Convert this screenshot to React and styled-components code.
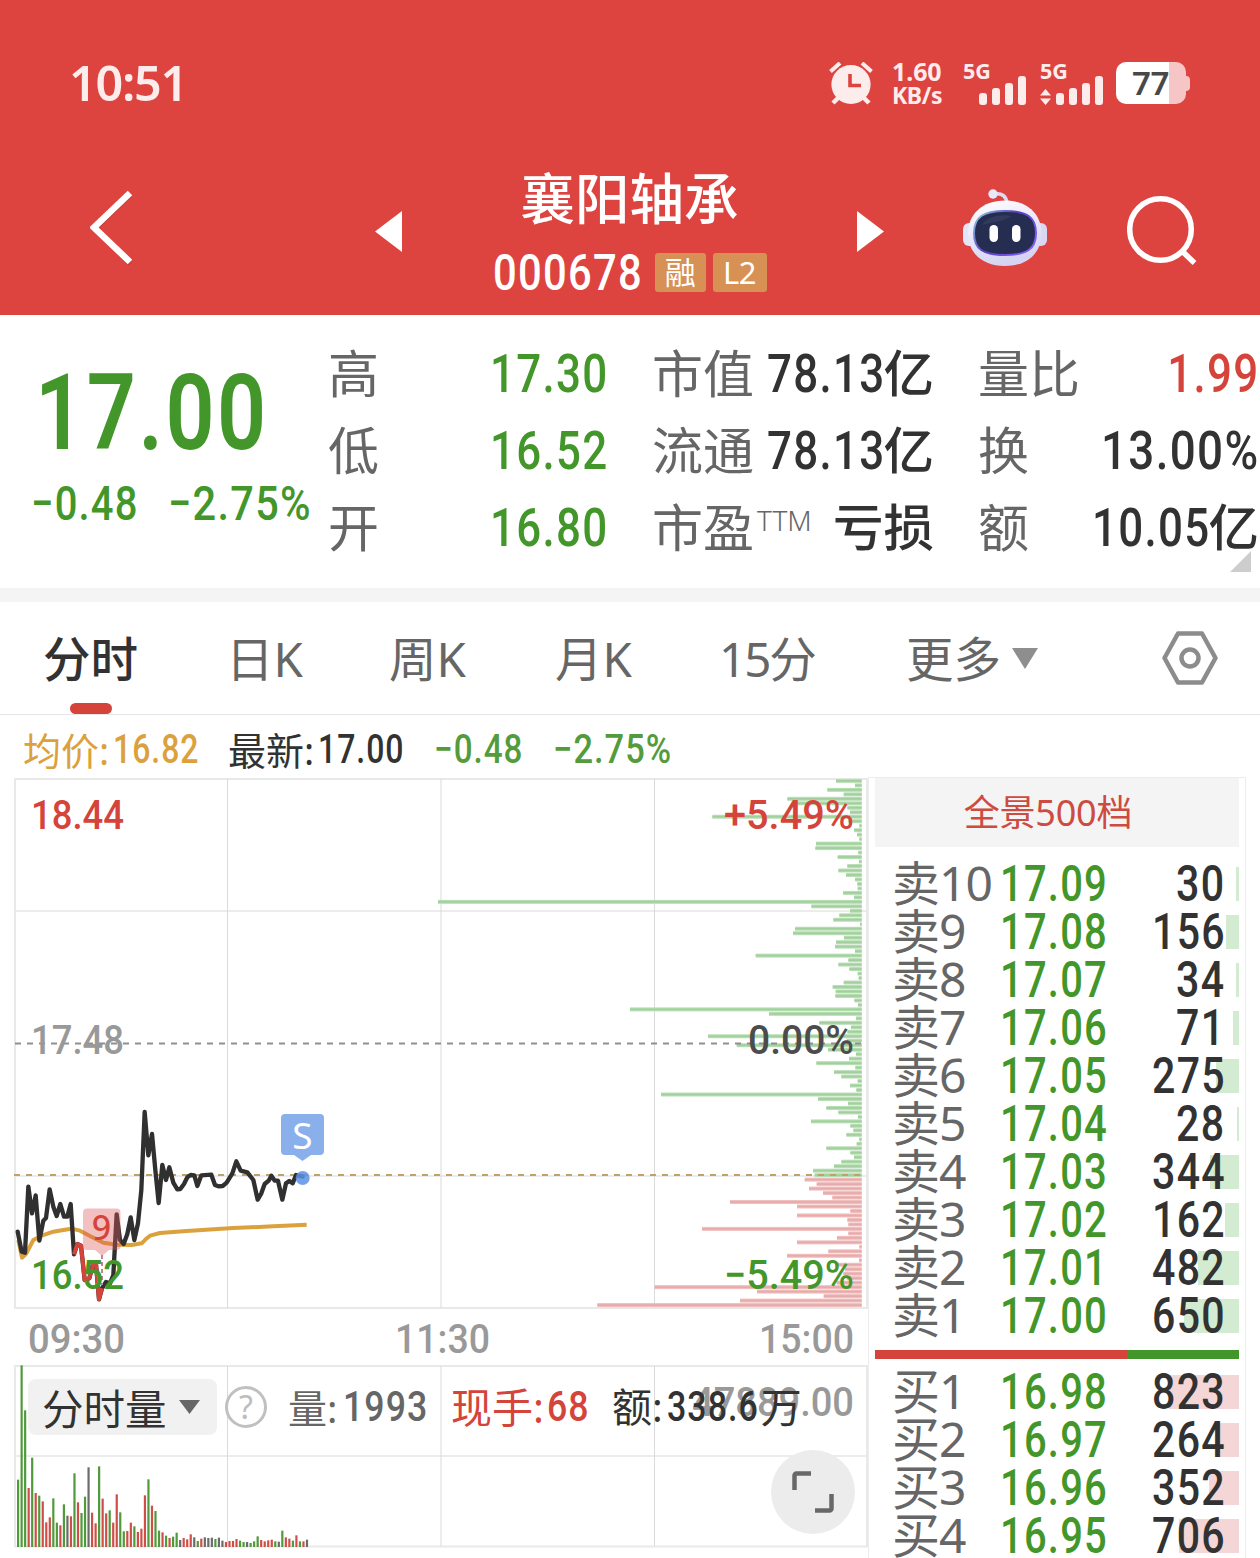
import React from 'react'
import styled, { createGlobalStyle } from 'styled-components'

const GREEN = '#43962a'
const RED = '#d5443a'
const DARK = '#323232'
const GREY = '#666666'

const GlobalStyle = createGlobalStyle`
    * { box-sizing: border-box; }
    body {
        margin: 0;
        background: #fff;
        font-family: "Noto Sans", "Noto Sans CJK SC", sans-serif;
    }
    svg { display: block; flex: none; }
`

const Screen = styled.div`
    width: 1260px;
    height: 1558px;
    overflow: hidden;
    background: #fff;
`

// narrow digits used for every price and amount
const Num = styled.span`
    display: inline-block;
    flex: none;
    width: ${p => (p.$w ? p.$w + 'px' : 'auto')};
    font-family: Roboto, sans-serif;
    font-size: ${p => p.$size}px;
    font-weight: ${p => p.$weight || 500};
    letter-spacing: 0.03em;
    margin-right: ${p => (p.$right ? '-0.03em' : 0)};
    line-height: 1;
    white-space: nowrap;
    color: ${p => p.$color || 'inherit'};
    transform: scaleX(${p => p.$x || 0.83});
    transform-origin: ${p => (p.$right ? 'right' : 'left')} center;
`
const Han = styled.span`
    flex: none;
    margin: 0 ${p => p.$gap || 0}px ${p => p.$lift || 0}px 0;
    font-size: ${p => p.$size}px;
    font-weight: ${p => p.$weight || 400};
    letter-spacing: ${p => p.$ls || 0}px;
    line-height: 1;
    white-space: nowrap;
    color: ${p => p.$color || 'inherit'};
`

/* ---------- header ---------- */
const Header = styled.header`
    height: 315px;
    background: #dd4440;
    color: #fff;
`
const StatusBar = styled.div`
    display: flex;
    align-items: flex-start;
    height: 155px;
    padding: 62px 0 0 69px;
    color: #fdecec;
`
const Clock = styled.div`
    width: 760px;
    font-size: 48.5px;
    font-weight: 600;
    line-height: 41px;
    letter-spacing: -1.3px;
`
const Speed = styled.div`
    width: 71px;
    margin-left: 19px;
    font-size: 25px;
    font-weight: 700;
    line-height: 24px;
    letter-spacing: -0.1px;
    margin-top: -3px;
    small {
        display: block;
        font-size: 23px;
        letter-spacing: -0.4px;
    }
`
const Signal = styled.div`
    width: ${p => p.$w}px;
    font-size: 21.5px;
    font-weight: 700;
    line-height: 14px;
    margin-top: 2px;
    svg { margin-top: -3px; }
`
const Battery = styled.div`
    display: flex;
    align-items: center;
    &::after {
        content: "";
        width: 4px;
        height: 15px;
        border-radius: 0 4px 4px 0;
        background: #f6c6c7;
    }
`
const BatteryBody = styled.div`
    width: 70px;
    height: 42px;
    border-radius: 10px;
    background: linear-gradient(90deg, #fff 53px, #f6c6c7 53px);
    color: #484848;
    font-size: 33px;
    font-weight: 600;
    line-height: 42px;
    letter-spacing: -0.5px;
    padding-left: 16px;
`
const NavBar = styled.div`
    display: grid;
    grid-template-columns: 285px 27px 455px 105px 165px auto;
    padding-left: 90px;
    height: 160px;
    align-items: start;
`
const NavIcon = styled.div`
    margin-top: ${p => p.$top}px;
`
const Title = styled.div`
    display: flex;
    flex-direction: column;
    align-items: center;
    padding-top: 16px;
`
const Code = styled.div`
    display: flex;
    align-items: center;
    margin-top: 27px;
    height: 40px;
`
const Badge = styled.span`
    width: ${p => p.$w}px;
    height: 39px;
    margin-left: 7px;
    border-radius: 3px;
    background: #d79155;
    font-size: 31px;
    line-height: 39px;
    text-align: center;
    letter-spacing: -0.5px;
`

/* ---------- quote ---------- */
const Quote = styled.section`
    position: relative;
    display: flex;
    height: 287px;
    border-bottom: 14px solid #f4f4f4;
`
const PriceBlock = styled.div`
    width: 328px;
    padding: 46px 0 0 35px;
    color: ${GREEN};
`
const Changes = styled.div`
    display: flex;
    margin: 12px 0 0 -4px;
`
const Stats = styled.div`
    display: grid;
    grid-template-columns: 279px 281px 280px;
    grid-auto-rows: 77px;
    column-gap: 45px;
    padding-top: 21px;
`
const Stat = styled.div`
    display: flex;
    align-items: center;
    color: ${GREY};
`
const StatValue = styled.div`
    display: flex;
    align-items: center;
    justify-content: flex-end;
    flex: 1;
    min-width: 0;
    padding-bottom: 2px;
    color: ${p => p.$color};
`
const Sup = styled.sup`
    align-self: flex-start;
    width: 56px;
    margin: 16px 0 0 3px;
    font-size: 28px;
    font-weight: 300;
    line-height: 28px;
`
const Corner = styled.i`
    position: absolute;
    right: 9px;
    bottom: 16px;
    border-left: 21px solid transparent;
    border-bottom: 21px solid #cdcdcd;
`

/* ---------- tabs ---------- */
const Tabs = styled.nav`
    display: grid;
    grid-template-columns: 183px 163px 166px 164px 187px 256px auto;
    align-items: center;
    height: 113px;
    padding-left: 43px;
    border-bottom: 1px solid #e6e6e6;
`
const Tab = styled.div`
    position: relative;
    display: flex;
    align-items: center;
    height: 112px;
    padding-bottom: 3px;
    gap: 11px;
    font-size: 47.5px;
    font-weight: ${p => (p.$active ? 500 : 400)};
    color: ${p => (p.$active ? DARK : GREY)};
    letter-spacing: ${p => p.$ls || 0}px;
    white-space: nowrap;
    svg { margin-top: 3px; }
    &::after {
        content: "";
        display: ${p => (p.$active ? 'block' : 'none')};
        position: absolute;
        left: 27px;
        bottom: 0;
        width: 42px;
        height: 11px;
        border-radius: 6px;
        background: ${RED};
    }
`

/* ---------- chart ---------- */
const Body = styled.main`
    display: flex;
`
const ChartColumn = styled.div`
    position: relative;
    width: 868px;
`
const Legend = styled.div`
    display: flex;
    align-items: center;
    height: 63px;
    padding: 7px 0 0 23px;
`
const LegendItem = styled.div`
    display: flex;
    align-items: center;
    width: ${p => p.$w}px;
    color: ${p => p.$color};
`
const ChartText = styled.text`
    font-family: Roboto, sans-serif;
    font-size: 41px;
    font-weight: 500;
`
const VolumeBar = styled.div`
    position: absolute;
    left: 28px;
    top: 664px;
    display: flex;
    align-items: center;
    height: 56px;
`
const Picker = styled.div`
    display: flex;
    align-items: center;
    gap: 12px;
    width: 189px;
    height: 56px;
    margin-right: 8px;
    padding-left: 14px;
    border-radius: 8px;
    background: #f1f1f1;
`
const Help = styled.div`
    width: 42px;
    height: 42px;
    margin-right: 21px;
    border: 3px solid #c0c0c0;
    border-radius: 50%;
    color: #bdbdbd;
    font-size: 32px;
    line-height: 35px;
    text-align: center;
`
const Expand = styled.button`
    position: absolute;
    left: 771px;
    top: 735px;
    width: 84px;
    height: 84px;
    padding: 20px;
    border: 0;
    border-radius: 50%;
    background: #ececec;
`

/* ---------- order book ---------- */
const Book = styled.aside`
    width: 378px;
    height: 790px;
    margin-top: 62px;
    padding: 0 6px;
    border: 1px solid #ececec;
    border-width: 1px 1px 0 1px;
`
const BookHead = styled.div`
    height: 69px;
    margin-bottom: 12px;
    background: #f4f4f4;
    color: #cd4b40;
    font-size: 36px;
    line-height: 70px;
    text-align: center;
    letter-spacing: -0.2px;
    padding-right: 18px;
`
const Row = styled.div`
    display: grid;
    grid-template-columns: 108px 110px 1fr;
    align-items: center;
    height: 48px;
    padding: 0 15px 1px 17px;
    background: linear-gradient(${p => p.$tint}, ${p => p.$tint}) no-repeat right 8px / ${p => p.$bar}px 34px;
`
const Amount = styled.div`
    text-align: right;
    line-height: 1;
`
const Ratio = styled.div`
    height: 9px;
    margin: 11px 0 8px;
    background: linear-gradient(90deg, ${RED} 252px, ${GREEN} 252px);
`

const asks = [
  ['卖10', '17.09', 30],
  ['卖9', '17.08', 156],
  ['卖8', '17.07', 34],
  ['卖7', '17.06', 71],
  ['卖6', '17.05', 275],
  ['卖5', '17.04', 28],
  ['卖4', '17.03', 344],
  ['卖3', '17.02', 162],
  ['卖2', '17.01', 482],
  ['卖1', '17.00', 650],
]
const bids = [
  ['买1', '16.98', 823],
  ['买2', '16.97', 264],
  ['买3', '16.96', 352],
  ['买4', '16.95', 706],
]

// depth bar lengths, three units to a pixel
const askDepth = [
  77, 20, 103, 54, 223, 193, 43, 35, 448, 40, 7, 23, 14, 7, 137, 139, 10, 72, 8, 43,
  70, 47, 20, 13, 12, 56, 23, 1271, 151, 35, 67, 85, 5, 200, 206, 53, 77, 80, 20, 318,
  40, 70, 37, 12, 9, 54, 87, 78, 79, 22, 11, 695, 278, 17, 127, 32, 43, 461, 45, 375,
  101, 17, 38, 136, 19, 83, 61, 12, 35, 16, 602, 131, 41, 106, 70, 11, 152, 34, 25, 46,
  7, 15, 106, 34, 23, 61, 83, 146, 141,
]
const bidDepth = [
  171, 135, 158, 116, 88, 395, 194, 34, 194, 43, 40, 479, 40, 74, 194, 7, 100, 224, 8, 80,
  50, 55, 45, 75, 621, 314, 114, 365, 793,
]
const depth = [...askDepth, ...bidDepth]

// one entry a minute: colour letter and height
const volume = (
  'g202 g545 g410 r177 g268 r162 g154 r137 r74 r89 g146 g73 r65 g128 k94 r92 g221 r134 g102 g151 ' +
  'k239 r103 r71 g242 r145 r101 g110 r73 r158 g104 g47 r48 r73 g62 r45 r55 r155 g203 r124 g108 ' +
  'g49 r44 g34 r27 g31 g43 k21 r27 r23 r38 k29 g18 r25 k29 k27 k28 g24 k28 k19 r15 r18 r18 r24 ' +
  'g19 g15 k15 g12 g17 g32 r21 r17 r20 r22 g17 k16 g49 r29 r25 g19 r35 g17 r17 k22'
).split(' ')
const volumeColor = { g: '#4f9a3a', r: '#cf4f48', k: '#6b6b6b' }

const tracePrice =
  '53,455 65,515 75,518 85,320 96,400 107,346 118,482 130,422 138,414 149,328 160,380 170,408 181,372 192,410 202,410 212,372 222,523 232,492 243,497 254,600 268,595 278,556 288,553 297,658 306,625 318,606 330,610 340,585 350,403 360,480 371,492 382,462 392,412 403,480 414,430 424,330 434,96 445,226 456,162 466,270 476,369 487,255 498,300 508,262 520,308 532,328 541,327 552,312 562,292 572,285 583,286 592,318 604,286 634,284 645,315 655,319 668,318 680,308 697,280 709,244 722,272 742,277 760,300 773,359 784,340 794,312 806,302 814,287 824,302 834,302 847,359 858,310 868,303 878,310 888,285 908,290'
const traceDrop = '222,523 232,492 243,497 254,600 268,595 278,556 288,553 297,658 306,625'
const traceAverage =
  '55,480 66,533 78,522 100,480 125,467 160,455 190,450 215,446 240,452 270,468 310,488 350,494 395,495 425,490 437,478 450,467 480,459 560,453 700,444 820,439 920,434'

const AlarmIcon = () => (
  <svg width="44" height="43" viewBox="0 0 44 43">
    <path d="M1.500 9.500l9.500-8.500M42.500 9.500l-9.500-8.500" stroke="#fdecec" strokeWidth="4" />
    <path d="M9 36l-5 5M35 36l5 5" stroke="#fdecec" strokeWidth="4.500" />
    <circle cx="22" cy="22.500" r="19.600" fill="#fdecec" />
    <path d="M21 12v11.500h11" fill="none" stroke="#dd4440" strokeWidth="3.600" />
  </svg>
)

const Bars = ({ arrows }) => (
  <svg width={arrows ? 64 : 65} height="30" viewBox={arrows ? '0 0 64 30' : '-16 0 65 30'} fill="#fdecec">
    <rect x={arrows ? 16 : 0} y="18" width="8" height="12" rx="3" />
    <rect x={arrows ? 29 : 13} y="13" width="8" height="17" rx="3" />
    <rect x={arrows ? 42 : 26} y="8" width="8" height="22" rx="3" />
    <rect x={arrows ? 55 : 39} y="1" width="8" height="29" rx="3" />
    {arrows && <path d="M0 20.500L5.500 14l5.500 6.500zM0 23.500l5.500 6.500 5.500-6.500z" />}
  </svg>
)

const RobotIcon = () => (
  <svg width="86" height="78" viewBox="0 0 86 78">
    <defs>
      <linearGradient id="shell" x1="0" y1="0" x2="0.3" y2="1">
        <stop offset="0" stopColor="#ffffff" />
        <stop offset="0.6" stopColor="#e6e5f8" />
        <stop offset="1" stopColor="#d6d4f2" />
      </linearGradient>
      <linearGradient id="rim" x1="0" y1="0" x2="1" y2="0.6">
        <stop offset="0" stopColor="#8ed4e0" />
        <stop offset="0.5" stopColor="#5b3fc0" />
        <stop offset="1" stopColor="#7a5cf0" />
      </linearGradient>
    </defs>
    <path d="M33 6c7-1 11 2 12 9" fill="none" stroke="#dcdaf3" strokeWidth="3.500" />
    <circle cx="31" cy="6" r="4.700" fill="#e9e8fa" />
    <rect x="1" y="35" width="14" height="23" rx="6" fill="#e4e3f7" />
    <rect x="71" y="35" width="14" height="23" rx="6" fill="#d9d8f3" />
    <path d="M43 12.500c23 0 36.500 14 36.500 33S66 78 43 78 6 64.500 6 45.500s14-33 37-33z" fill="url(#shell)" />
    <path d="M43 23c22 0 31 6 31 22S65 67 43 67 12 61 12 45s9-22 31-22z" fill="#252d50" stroke="url(#rim)" strokeWidth="2" />
    <path d="M20 37c5-9 19-11 30-9-10 6-20 6-30 9z" fill="#3b4468" opacity="0.6" />
    <rect x="27.500" y="37" width="8.500" height="17" rx="4.200" fill="#fff" />
    <rect x="50" y="37" width="8.500" height="17" rx="4.200" fill="#fff" />
  </svg>
)

const StatCell = ({ label, sup, num, unit, color = DARK }) => (
  <Stat>
    <Han $size={51} $lift={2}>{label}</Han>
    {sup && <Sup>{sup}</Sup>}
    <StatValue $color={color}>
      {num && <Num $size={53.5} $x={num.includes('%') ? 0.855 : 0.82} $right>{num}</Num>}
      {unit && <Han $size={50.5} $weight={500} $gap={-1}>{unit}</Han>}
    </StatValue>
  </Stat>
)

const BookRow = ({ row, tint }) => (
  <Row $tint={tint} $bar={Math.max(2, Math.round(row[2] * 0.085))}>
    <Han $size={48} $lift={4} $ls={-1} $color={GREY}>{row[0]}</Han>
    <Num $size={49.5} $x={0.808} $color={GREEN}>{row[1]}</Num>
    <Amount><Num $size={49.5} $color={DARK} $right>{row[2]}</Num></Amount>
  </Row>
)

const Chart = () => (
  <svg width="868" height="780" viewBox="0 0 868 780">
    <g fill="none" stroke="#e9e9e9" strokeWidth="2">
      <path d="M15 1H867V530H15zM15 588H867V768.500H15z" />
      <path d="M15 133H867M15 398H867M15 678H867" stroke="#e6e6e6" strokeWidth="1.500" />
      <path d="M227.500 1V530M441 1V530M654.500 1V530M227.500 588V768M441 588V768M654.500 588V768" stroke="#dadada" strokeWidth="1" />
    </g>
    {depth.map((len, i) => {
      const y = 0.9 + i * 4.48
      const ask = i < askDepth.length
      return (
        <g key={i}>
          <rect x={861.7 - len / 3} y={y} width={len / 3} height="4" fill={ask ? '#b9dfb5' : '#f2bebe'} />
          <rect x={861.7 - len / 3} y={y + 1.1} width={len / 3} height="1.800" fill={ask ? '#a2cf9d' : '#e6acac'} />
        </g>
      )
    })}
    <path d="M15 265.500H866" stroke="#8f8f8f" strokeWidth="2" strokeDasharray="6 6" />
    <path d="M14 397H866" stroke="#c2a06a" strokeWidth="2" strokeDasharray="6 6" />
    <g transform="translate(0 302) scale(0.33333)" fill="none" strokeLinejoin="round">
      <polyline points={traceAverage} stroke="#dba13c" strokeWidth="12" />
      <polyline points={tracePrice} stroke="#303030" strokeWidth="13" strokeLinecap="round" />
      <polyline points={traceDrop} stroke="#d5443a" strokeWidth="12" />
    </g>
    <path d="M102 477V507" stroke="#c98285" strokeWidth="2" strokeDasharray="4 3" />
    <path d="M87 430.500h29.500a4 4 0 014 4V468a4 4 0 01-4 4H109l-7 6-7-6H87a4 4 0 01-4-4V434.500a4 4 0 014-4z" fill="#dd5a5a" fillOpacity="0.380" />
    <text x="101.500" y="462" textAnchor="middle" fontFamily="Noto Sans" fontSize="34" fontWeight="500" fill="#d5443a">9</text>
    <path d="M285 336h35a4 4 0 014 4v33a4 4 0 01-4 4h-9l-8.500 6-8.500-6H285a4 4 0 01-4-4V340a4 4 0 014-4z" fill="#8ab0ec" />
    <text x="302.500" y="371" textAnchor="middle" fontFamily="Noto Sans" fontSize="37" fill="#fff">S</text>
    <circle cx="302.700" cy="400" r="7" fill="#5c92e6" fillOpacity="0.850" />
    <ChartText x="31" y="51" textLength="93" lengthAdjust="spacingAndGlyphs" fill={RED}>18.44</ChartText>
    <ChartText x="31" y="276" textLength="93" lengthAdjust="spacingAndGlyphs" fill="#999">17.48</ChartText>
    <ChartText x="31" y="511" textLength="93" lengthAdjust="spacingAndGlyphs" fill={GREEN}>16.52</ChartText>
    <ChartText x="724" y="51" textLength="130" lengthAdjust="spacingAndGlyphs" fill={RED}>+5.49%</ChartText>
    <ChartText x="748" y="276" textLength="106" lengthAdjust="spacingAndGlyphs" fill="#4c4c4c">0.00%</ChartText>
    <ChartText x="724" y="511" textLength="130" lengthAdjust="spacingAndGlyphs" fill={GREEN}>−5.49%</ChartText>
    <ChartText x="28" y="575" textLength="97" lengthAdjust="spacingAndGlyphs" fill="#999">09:30</ChartText>
    <ChartText x="395" y="575" textLength="95" lengthAdjust="spacingAndGlyphs" fill="#999">11:30</ChartText>
    <ChartText x="759" y="575" textLength="95" lengthAdjust="spacingAndGlyphs" fill="#999">15:00</ChartText>
    {volume.map((v, i) => {
      const h = Number(v.slice(1)) / 3
      return <rect key={i} x={17 + i * 3.523} y={769 - h} width="2.200" height={h} fill={volumeColor[v[0]]} />
    })}
    <ChartText x="692" y="638" textLength="162" lengthAdjust="spacingAndGlyphs" fill="#999">47889.00</ChartText>
  </svg>
)

export default function App() {
  return (
    <>
      <GlobalStyle />
      <Screen>
        <Header>
          <StatusBar>
            <Clock>10:51</Clock>
            <AlarmIcon />
            <Speed>1.60<small>KB/s</small></Speed>
            <Signal $w={77}>5G<Bars /></Signal>
            <Signal $w={76}>5G<Bars arrows /></Signal>
            <Battery><BatteryBody>77</BatteryBody></Battery>
          </StatusBar>
          <NavBar>
            <NavIcon $top={35}>
              <svg width="44" height="76" viewBox="0 0 44 76">
                <path d="M40 5L5 39l35 35" fill="none" stroke="#b83733" strokeWidth="5" opacity="0.6" />
                <path d="M40 3L4 37.500 40 72" fill="none" stroke="#fff" strokeWidth="6.500" />
              </svg>
            </NavIcon>
            <NavIcon $top={56}>
              <svg width="27" height="41"><path d="M27 0V41L0 20.500z" fill="#fff" /></svg>
            </NavIcon>
            <Title>
              <Han $size={54.5} $weight={500}>襄阳轴承</Han>
              <Code>
                <Num $size={50} $x={0.835} $w={155}>000678</Num>
                <Badge $w={51}>融</Badge>
                <Badge $w={54}>L2</Badge>
              </Code>
            </Title>
            <NavIcon $top={56}>
              <svg width="27" height="41"><path d="M0 0V41L27 20.500z" fill="#fff" /></svg>
            </NavIcon>
            <NavIcon $top={33}><RobotIcon /></NavIcon>
            <NavIcon $top={40}>
              <svg width="72" height="72" viewBox="0 0 72 72" fill="none" stroke="#fff" strokeWidth="5.500">
                <circle cx="33.500" cy="34.500" r="30.800" />
                <path d="M55 56l12.500 12" />
              </svg>
            </NavIcon>
          </NavBar>
        </Header>

        <Quote>
          <PriceBlock>
            <Num $size={105.5} $x={0.815} $weight={600}>17.00</Num>
            <Changes>
              <Num $size={49} $x={0.815} $w={137}>−0.48</Num>
              <Num $size={49} $x={0.848}>−2.75%</Num>
            </Changes>
          </PriceBlock>
          <Stats>
            <StatCell label="高" num="17.30" color={GREEN} />
            <StatCell label="市值" num="78.13" unit="亿" />
            <StatCell label="量比" num="1.99" color={RED} />
            <StatCell label="低" num="16.52" color={GREEN} />
            <StatCell label="流通" num="78.13" unit="亿" />
            <StatCell label="换" num="13.00%" />
            <StatCell label="开" num="16.80" color={GREEN} />
            <StatCell label="市盈" sup="TTM" unit="亏损" />
            <StatCell label="额" num="10.05" unit="亿" />
          </Stats>
          <Corner />
        </Quote>

        <Tabs>
          <Tab $active>分时</Tab>
          <Tab>日K</Tab>
          <Tab>周K</Tab>
          <Tab>月K</Tab>
          <Tab $ls={-2}>15分</Tab>
          <Tab>
            更多
            <svg width="26" height="21"><path d="M0 0H26L13 21z" fill="#8e8e8e" /></svg>
          </Tab>
          <svg width="56" height="56" viewBox="0 0 56 56" fill="none" stroke="#8c8c8c" strokeWidth="4.500" strokeLinejoin="round">
            <path d="M16 3.500H40L53.500 28 40 52.500H16L2.500 28z" />
            <circle cx="28" cy="28" r="8.500" />
          </svg>
        </Tabs>

        <Body>
          <ChartColumn>
            <Legend>
              <LegendItem $w={205} $color="#dba13c">
                <Han $size={38} $gap={4}>均价:</Han><Num $size={40} $x={0.8}>16.82</Num>
              </LegendItem>
              <LegendItem $w={206} $color={DARK}>
                <Han $size={38} $gap={4}>最新:</Han><Num $size={40} $x={0.8}>17.00</Num>
              </LegendItem>
              <LegendItem $w={119} $color="#549b3b"><Num $size={40}>−0.48</Num></LegendItem>
              <LegendItem $color="#549b3b"><Num $size={40} $x={0.86}>−2.75%</Num></LegendItem>
            </Legend>
            <Chart />
            <VolumeBar>
              <Picker>
                <Han $size={41.5} $color={DARK} $lift={-5}>分时量</Han>
                <svg width="21" height="14"><path d="M0 0H21L10.500 14z" fill="#666" /></svg>
              </Picker>
              <Help>?</Help>
              <LegendItem $w={163} $color={GREY}>
                <Han $size={39} $gap={6}>量:</Han><Num $size={42} $x={0.85}>1993</Num>
              </LegendItem>
              <LegendItem $w={161} $color={RED}>
                <Han $size={41} $gap={3}>现手:</Han><Num $size={42} $x={0.85}>68</Num>
              </LegendItem>
              <LegendItem $color={DARK}>
                <Han $size={40} $gap={4}>额:</Han><Num $size={42} $x={0.81} $w={94}>338.6</Num><Han $size={41}>万</Han>
              </LegendItem>
            </VolumeBar>
            <Expand>
              <svg width="44" height="44" fill="none" stroke="#686868" strokeWidth="4.500">
                <path d="M3.500 20V5.500a2 2 0 012-2H20M24 40.500H38.500a2 2 0 002-2V24" />
              </svg>
            </Expand>
          </ChartColumn>

          <Book>
            <BookHead>全景500档</BookHead>
            {asks.map(row => <BookRow key={row[0]} row={row} tint="#d3ebd0" />)}
            <Ratio />
            {bids.map(row => <BookRow key={row[0]} row={row} tint="#f5d6d6" />)}
          </Book>
        </Body>
      </Screen>
    </>
  )
}
